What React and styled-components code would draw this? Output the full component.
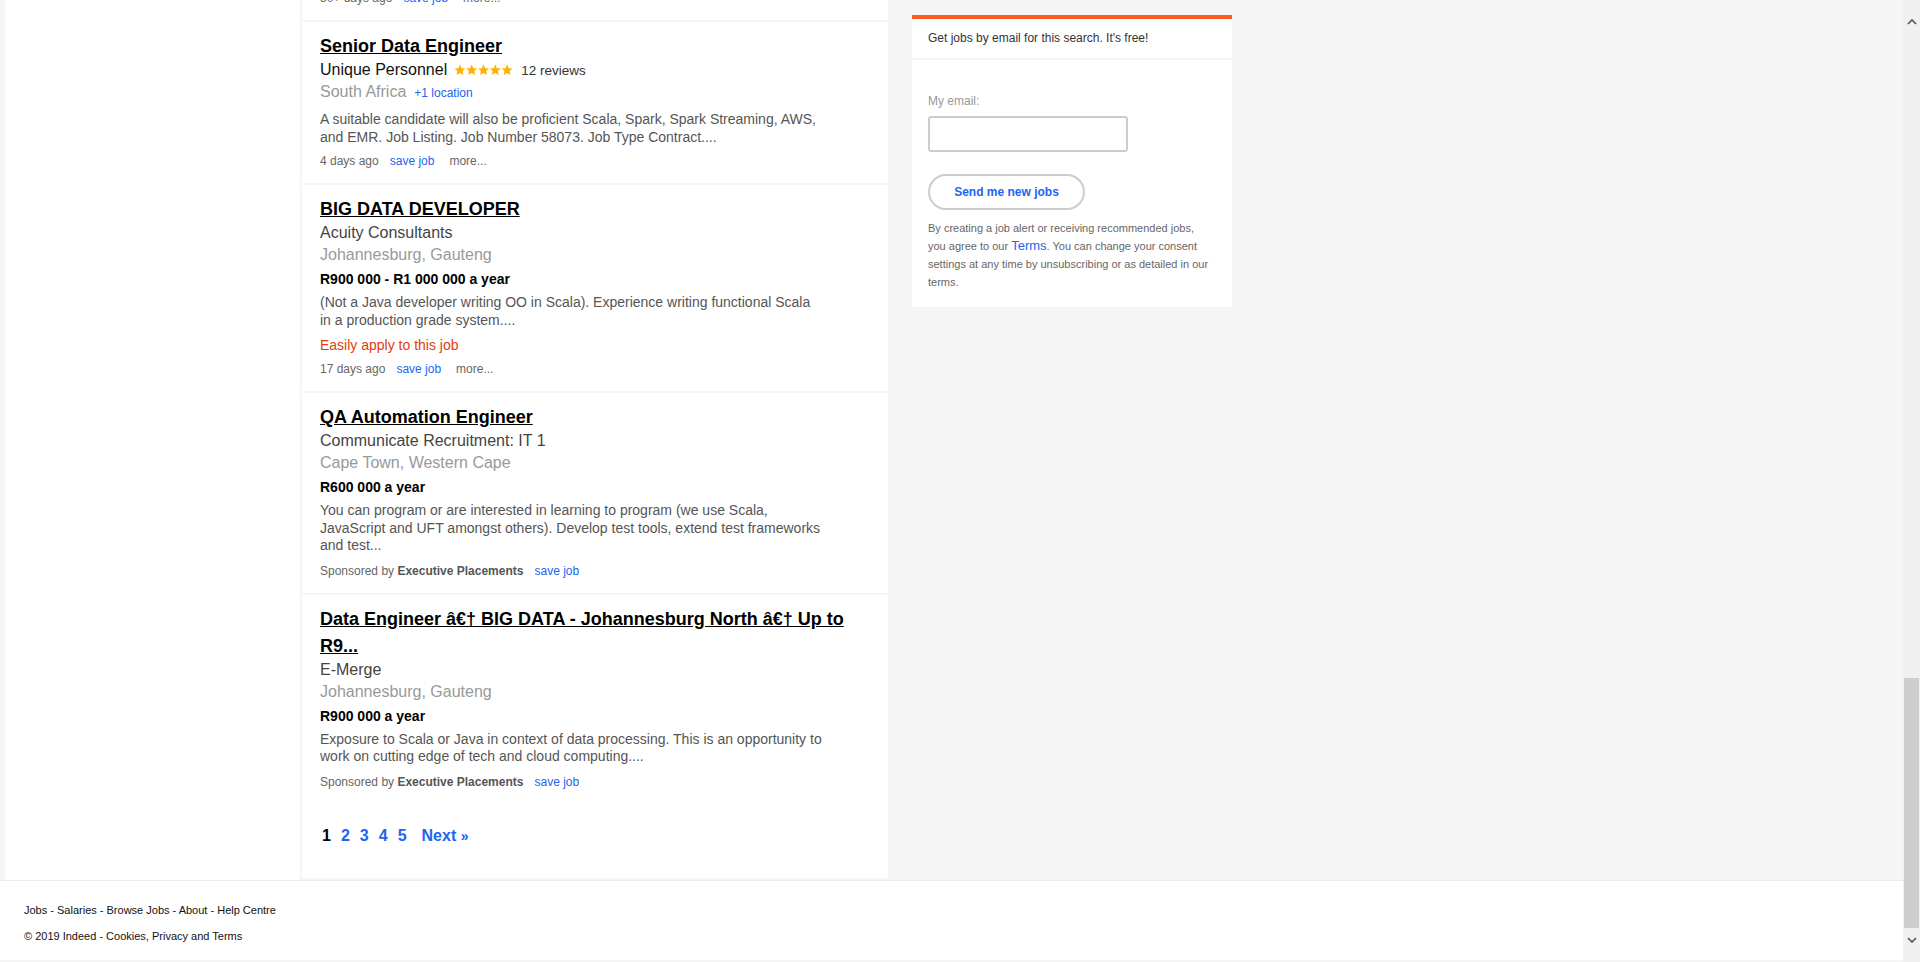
import React, { useLayoutEffect } from "react";
import styled, { createGlobalStyle } from "styled-components";

const GlobalStyle = createGlobalStyle`
  html, body {
    margin: 0;
    padding: 0;
  }
  body {
    background: #f5f5f5;
    font-family: "Liberation Sans", Arial, sans-serif;
    color: #333;
  }
  a {
    cursor: pointer;
  }
`;

const earlierJobs = [
  {
    title: "Scala Developer",
    company: "Network Recruitment",
    location: "Cape Town, Western Cape",
    salary: "R55 000 - R65 000 a month",
    snippet:
      "We are looking for a Scala developer to join a product team building distributed data platforms. Functional programming experience...",
    date: "2 days ago",
  },
  {
    title: "Senior Scala Engineer",
    company: "Parvana",
    location: "Cape Town, Western Cape",
    snippet:
      "Design and build services in Scala and Akka. Strong knowledge of JVM languages and event driven architecture....",
    easy: true,
    date: "5 days ago",
  },
  {
    title: "Big Data Engineer",
    company: "Datafin Recruitment",
    location: "Johannesburg, Gauteng",
    salary: "R700 000 - R850 000 a year",
    snippet:
      "Hadoop, Spark and Scala experience required. Work with large data sets in a cloud environment...",
    date: "6 days ago",
  },
  {
    title: "Software Developer (Scala / Java)",
    company: "Takealot.com",
    rating: "48 reviews",
    location: "Cape Town, Western Cape",
    snippet:
      "Experience in Java, Scala or a similar language. Comfortable working in an agile team with continuous delivery....",
    date: "8 days ago",
  },
  {
    title: "Data Platform Engineer",
    company: "Capitec Bank",
    rating: "212 reviews",
    location: "Stellenbosch, Western Cape",
    snippet:
      "Build streaming pipelines using Kafka, Spark and Scala. Experience with AWS or Azure data services is advantageous....",
    date: "10 days ago",
  },
  {
    title: "Functional Programmer",
    company: "Jumo",
    location: "Cape Town, Western Cape",
    snippet:
      "You enjoy writing Scala or Haskell and care about correctness, types and clean code. Remote friendly team....",
    easy: true,
    date: "12 days ago",
  },
  {
    title: "Backend Engineer - Scala",
    company: "Yoco",
    location: "Cape Town, Western Cape",
    salary: "R600 000 - R900 000 a year",
    snippet:
      "Our backend is built with Scala, Postgres and Kubernetes. You will own services end to end....",
    date: "14 days ago",
  },
  {
    title: "Spark Developer",
    company: "iOCO",
    location: "Johannesburg, Gauteng",
    snippet:
      "Develop batch and streaming jobs in Spark (Scala or Python). Experience with Hive and HDFS required....",
    date: "15 days ago",
  },
  {
    title: "Intermediate Scala Developer",
    company: "Glenrand MIB",
    location: "Sandton, Gauteng",
    salary: "R45 000 a month",
    snippet:
      "Intermediate developer with 3+ years Scala experience. Play Framework and Akka HTTP knowledge beneficial....",
    date: "20 days ago",
  },
  {
    title: "Data Engineer",
    company: "Standard Bank",
    rating: "1 536 reviews",
    location: "Johannesburg, Gauteng",
    snippet:
      "Build and maintain data pipelines on Hadoop and Spark. Scala, Java or Python programming skills required....",
    date: "22 days ago",
  },
  {
    title: "Machine Learning Engineer",
    company: "Discovery",
    rating: "671 reviews",
    location: "Sandton, Gauteng",
    snippet:
      "Deploy machine learning models to production. Experience with Spark, Scala and Python is essential....",
    date: "25 days ago",
  },
  {
    title: "Full Stack Developer",
    company: "Entelect",
    location: "Pretoria, Gauteng",
    snippet:
      "React on the front end and Scala on the back end. Collaborate with product owners to deliver features....",
    date: "30+ days ago",
  },
];

const visibleJobs = [
  {
    title: "Senior Data Engineer",
    company: "Unique Personnel",
    companyLink: true,
    rating: "12 reviews",
    location: "South Africa",
    extraLocation: "+1 location",
    snippet:
      "A suitable candidate will also be proficient Scala, Spark, Spark Streaming, AWS, and EMR. Job Listing. Job Number 58073. Job Type Contract....",
    date: "4 days ago",
  },
  {
    title: "BIG DATA DEVELOPER",
    company: "Acuity Consultants",
    location: "Johannesburg, Gauteng",
    salary: "R900 000 - R1 000 000 a year",
    snippet:
      "(Not a Java developer writing OO in Scala). Experience writing functional Scala in a production grade system....",
    easy: true,
    date: "17 days ago",
  },
  {
    title: "QA Automation Engineer",
    company: "Communicate Recruitment: IT 1",
    location: "Cape Town, Western Cape",
    salary: "R600 000 a year",
    snippet:
      "You can program or are interested in learning to program (we use Scala, JavaScript and UFT amongst others). Develop test tools, extend test frameworks and test...",
    sponsor: "Executive Placements",
  },
  {
    title: "Data Engineer â€† BIG DATA - Johannesburg North â€† Up to R9...",
    company: "E-Merge",
    location: "Johannesburg, Gauteng",
    salary: "R900 000 a year",
    snippet:
      "Exposure to Scala or Java in context of data processing. This is an opportunity to work on cutting edge of tech and cloud computing....",
    sponsor: "Executive Placements",
  },
];

const filters = [
  { name: "Salary Estimate", items: ["R300 000+ (54)", "R500 000+ (41)", "R700 000+ (22)", "R900 000+ (9)"] },
  { name: "Job Type", items: ["Permanent (48)", "Full-time (31)", "Contract (12)"] },
  { name: "Location", items: ["Cape Town, Western Cape (29)", "Johannesburg, Gauteng (18)", "Sandton, Gauteng (7)", "Pretoria, Gauteng (3)"] },
  { name: "Company", items: ["Executive Placements (6)", "E-Merge (5)", "Network Recruitment (4)", "Parvana (3)"] },
  { name: "Experience Level", items: ["Mid Level (25)", "Senior Level (19)", "Entry Level (4)"] },
];

function Stars() {
  return (
    <StarRow viewBox="0 0 60 12" width="59" height="12">
      {[0, 1, 2, 3, 4].map((i) => (
        <path
          key={i}
          transform={`translate(${i * 12} 0)`}
          d="M6 0.4l1.65 3.7 3.95.35-3 2.65.9 3.9L6 9 2.5 11l.9-3.9-3-2.65 3.95-.35z"
          fill="#ffb103"
        />
      ))}
    </StarRow>
  );
}

function Chevron({ down }) {
  return (
    <svg width="10" height="6" viewBox="0 0 10 6">
      <path
        d={down ? "M1 1l4 4 4-4" : "M1 5l4-4 4 4"}
        fill="none"
        stroke="#505050"
        strokeWidth="1.6"
      />
    </svg>
  );
}

function JobCard({ job }) {
  return (
    <Card>
      <Title href="#">{job.title}</Title>
      <CompanyLine>
        <Company $link={job.companyLink}>{job.company}</Company>
        {job.rating && (
          <>
            <Stars />
            <Reviews>{job.rating}</Reviews>
          </>
        )}
      </CompanyLine>
      <LocationLine>
        {job.location}
        {job.extraLocation && <MoreLocations href="#">{job.extraLocation}</MoreLocations>}
      </LocationLine>
      {job.salary && <Salary>{job.salary}</Salary>}
      <Snippet>{job.snippet}</Snippet>
      {job.easy && <EasyApply>Easily apply to this job</EasyApply>}
      {job.sponsor ? (
        <MetaRow $gap="8px">
          Sponsored by <SponsorName>{job.sponsor}</SponsorName>
          <SaveLink href="#">save job</SaveLink>
        </MetaRow>
      ) : (
        <MetaRow $gap="7px">
          {job.date}
          <SaveLink href="#">save job</SaveLink>
          <MoreLink href="#">more...</MoreLink>
        </MetaRow>
      )}
    </Card>
  );
}

export default function App() {
  useLayoutEffect(() => {
    const toBottom = () =>
      window.scrollTo(0, document.documentElement.scrollHeight);
    toBottom();
    const t = setTimeout(toBottom, 30);
    return () => clearTimeout(t);
  }, []);

  return (
    <>
      <GlobalStyle />
      <Frame>
        <Page>
          <Header>
            <Logo>indeed</Logo>
            <Nav>
              <NavLink href="#">Find Jobs</NavLink>
              <NavLink href="#">Company Reviews</NavLink>
              <NavLink href="#">Find Salaries</NavLink>
            </Nav>
          </Header>
          <SearchBar>
            <Field>
              <FieldLabel>What</FieldLabel>
              <SearchInput defaultValue="scala" />
            </Field>
            <Field>
              <FieldLabel>Where</FieldLabel>
              <SearchInput defaultValue="South Africa" />
            </Field>
            <FindButton>Find Jobs</FindButton>
          </SearchBar>
          <Main>
            <LeftColumn>
              {filters.map((f) => (
                <FilterGroup key={f.name}>
                  <FilterTitle>{f.name}</FilterTitle>
                  {f.items.map((it) => (
                    <FilterItem key={it} href="#">
                      {it}
                    </FilterItem>
                  ))}
                </FilterGroup>
              ))}
            </LeftColumn>
            <Results>
              <ResultsHead>
                <ResultsTitle>scala jobs in South Africa</ResultsTitle>
                <ResultsCount>Page 1 of 63 jobs</ResultsCount>
              </ResultsHead>
              {earlierJobs.map((job, i) => (
                <JobCard job={job} key={"e" + i} />
              ))}
              {visibleJobs.map((job, i) => (
                <JobCard job={job} key={"v" + i} />
              ))}
              <Pagination>
                <PageCurrent>1</PageCurrent>
                {[2, 3, 4, 5].map((n) => (
                  <PageLink href="#" key={n}>
                    {n}
                  </PageLink>
                ))}
                <NextLink href="#">
                  Next <Raquo>»</Raquo>
                </NextLink>
              </Pagination>
            </Results>
            <Side>
              <AlertBox>
                <AlertHead>Get jobs by email for this search. It's free!</AlertHead>
                <AlertBody>
                  <EmailLabel>My email:</EmailLabel>
                  <EmailInput type="email" />
                  <SendButton>Send me new jobs</SendButton>
                  <Consent>
                    By creating a job alert or receiving recommended jobs, you
                    agree to our <TermsLink href="#">Terms</TermsLink>. You can
                    change your consent settings at any time by unsubscribing or
                    as detailed in our terms.
                  </Consent>
                </AlertBody>
              </AlertBox>
            </Side>
          </Main>
          <Footer>
            <FooterLinks>
              Jobs - Salaries - Browse Jobs - About - Help Centre
            </FooterLinks>
            <FooterLinks>© 2019 Indeed - Cookies, Privacy and Terms</FooterLinks>
          </Footer>
        </Page>
        <ScrollRail>
          <ScrollWindow>
            <ScrollButton $pad="19px 0 0">
              <Chevron />
            </ScrollButton>
            <ScrollTrack>
              <ScrollThumb />
            </ScrollTrack>
            <ScrollButton $pad="9px 0 0">
              <Chevron down />
            </ScrollButton>
          </ScrollWindow>
        </ScrollRail>
      </Frame>
    </>
  );
}

const Frame = styled.div`
  display: flex;
  align-items: stretch;
`;

const Page = styled.div`
  flex: 1;
  min-width: 0;
`;

const ScrollRail = styled.div`
  width: 17px;
  flex-shrink: 0;
  background: #f0f0f0;
  display: flex;
  flex-direction: column;
  justify-content: flex-end;
`;

const ScrollWindow = styled.div`
  height: 962px;
  display: flex;
  flex-direction: column;
`;

const ScrollButton = styled.div`
  height: 34px;
  box-sizing: border-box;
  padding: ${(p) => p.$pad};
  display: flex;
  justify-content: center;
  align-items: flex-start;
`;

const ScrollTrack = styled.div`
  flex: 1;
  display: flex;
  flex-direction: column;
  justify-content: flex-end;
  padding: 0 1px;
`;

const ScrollThumb = styled.div`
  height: 250px;
  background: #cdcdcd;
`;

const Header = styled.header`
  display: flex;
  align-items: center;
  gap: 40px;
  height: 60px;
  padding: 0 24px;
  background: #fff;
  border-bottom: 1px solid #e4e4e4;
`;

const Logo = styled.div`
  font-size: 30px;
  font-weight: bold;
  color: #2164f3;
  letter-spacing: -1px;
`;

const Nav = styled.nav`
  display: flex;
  gap: 28px;
`;

const NavLink = styled.a`
  font-size: 14px;
  font-weight: bold;
  color: #333;
  text-decoration: none;
`;

const SearchBar = styled.div`
  display: flex;
  align-items: flex-end;
  gap: 16px;
  padding: 24px 24px 28px 320px;
  background: #fff;
  border-bottom: 1px solid #e4e4e4;
`;

const Field = styled.label`
  display: flex;
  flex-direction: column;
  gap: 6px;
`;

const FieldLabel = styled.span`
  font-size: 15px;
  font-weight: bold;
  color: #000;
`;

const SearchInput = styled.input`
  width: 260px;
  height: 34px;
  padding: 0 10px;
  border: 2px solid #ccc;
  border-radius: 4px;
  font: 16px "Liberation Sans", Arial, sans-serif;
`;

const FindButton = styled.button`
  height: 40px;
  padding: 0 24px;
  border: 0;
  border-radius: 4px;
  background: #2164f3;
  color: #fff;
  font: bold 15px "Liberation Sans", Arial, sans-serif;
`;

const Main = styled.main`
  display: flex;
  align-items: stretch;
  padding-left: 5px;
  margin-top: 16px;
`;

const LeftColumn = styled.aside`
  width: 295px;
  flex-shrink: 0;
  background: #fff;
  padding: 20px 18px;
  box-sizing: border-box;
`;

const FilterGroup = styled.div`
  margin-bottom: 22px;
`;

const FilterTitle = styled.div`
  font-size: 14px;
  font-weight: bold;
  color: #000;
  margin-bottom: 8px;
`;

const FilterItem = styled.a`
  display: block;
  font-size: 13px;
  line-height: 20px;
  color: #2164f3;
  text-decoration: none;
`;

const Results = styled.section`
  width: 586px;
  flex-shrink: 0;
  margin-left: 2px;
  padding-bottom: 2px;
  display: flex;
  flex-direction: column;
  gap: 2px;
`;

const ResultsHead = styled.div`
  background: #fff;
  padding: 18px 18px 14px;
`;

const ResultsTitle = styled.h1`
  margin: 0 0 6px;
  font-size: 20px;
  color: #000;
`;

const ResultsCount = styled.div`
  font-size: 13px;
  color: #666;
`;

const Card = styled.div`
  background: #fff;
  padding: 11px 18px 14px;
`;

const Title = styled.a`
  display: block;
  max-width: 540px;
  font-size: 18px;
  font-weight: bold;
  line-height: 27px;
  color: #000;
  text-decoration: underline;
`;

const CompanyLine = styled.div`
  display: flex;
  align-items: center;
  height: 20px;
`;

const Company = styled.span`
  font-size: 16px;
  line-height: 20px;
  color: ${(p) => (p.$link ? "#111" : "#444")};
`;

const StarRow = styled.svg`
  margin-left: 7px;
  display: block;
`;

const Reviews = styled.span`
  margin-left: 8px;
  font-size: 13.5px;
  color: #333;
`;

const LocationLine = styled.div`
  font-size: 16px;
  line-height: 24px;
  color: #999;
`;

const MoreLocations = styled.a`
  margin-left: 8px;
  font-size: 12px;
  color: #2164f3;
  text-decoration: none;
`;

const Salary = styled.div`
  margin-top: 4px;
  font-size: 14px;
  font-weight: bold;
  line-height: 17px;
  color: #000;
`;

const Snippet = styled.div`
  margin-top: 6px;
  max-width: 502px;
  font-size: 14px;
  line-height: 17.5px;
  color: #555;
`;

const EasyApply = styled.div`
  margin-top: 8px;
  font-size: 14px;
  line-height: 17px;
  color: #e0400b;
`;

const MetaRow = styled.div`
  margin-top: ${(p) => p.$gap};
  font-size: 12px;
  line-height: 16px;
  color: #666;
`;

const SponsorName = styled.b`
  color: #555;
`;

const SaveLink = styled.a`
  margin-left: 11px;
  color: #2164f3;
  text-decoration: none;
`;

const MoreLink = styled.a`
  margin-left: 15px;
  color: #666;
  text-decoration: none;
`;

const Pagination = styled.div`
  display: flex;
  align-items: baseline;
  gap: 10px;
  background: #fff;
  margin-top: -2px;
  padding: 21px 20px 31px;
  font-size: 16px;
  font-weight: bold;
  line-height: 22px;
`;

const PageCurrent = styled.span`
  color: #000;
`;

const PageLink = styled.a`
  color: #2164f3;
  text-decoration: none;
`;

const NextLink = styled(PageLink)`
  margin-left: 5px;
`;

const Raquo = styled.span`
  font-size: 14px;
`;

const Side = styled.aside`
  width: 320px;
  flex-shrink: 0;
  margin-left: 24px;
  display: flex;
  flex-direction: column;
  justify-content: flex-end;
  padding-bottom: 573px;
`;

const AlertBox = styled.div`
  background: #fff;
  border-top: 4px solid #fd5b1f;
`;

const AlertHead = styled.div`
  padding: 12px 16px 13px;
  font-size: 12px;
  line-height: 14px;
  color: #333;
  border-bottom: 2px solid #f5f5f5;
`;

const AlertBody = styled.div`
  padding: 34px 16px 16px;
  display: flex;
  flex-direction: column;
  align-items: flex-start;
`;

const EmailLabel = styled.label`
  font-size: 12px;
  line-height: 14px;
  color: #999;
`;

const EmailInput = styled.input`
  box-sizing: border-box;
  width: 200px;
  height: 36px;
  margin-top: 8px;
  border: 2px solid #ccc;
  border-radius: 3px;
`;

const SendButton = styled.button`
  box-sizing: border-box;
  width: 157px;
  height: 36px;
  margin-top: 22px;
  background: #fff;
  border: 2px solid #ccc;
  border-radius: 18px;
  color: #2164f3;
  font: bold 12px "Liberation Sans", Arial, sans-serif;
`;

const Consent = styled.p`
  margin: 9px 0 0;
  max-width: 282px;
  font-size: 11px;
  line-height: 18px;
  color: #666;
`;

const TermsLink = styled.a`
  font-size: 13px;
  color: #2164f3;
  text-decoration: none;
`;

const Footer = styled.footer`
  margin-bottom: 2px;
  padding: 21px 24px 16px;
  background: #fff;
  border-top: 1px solid #ececec;
  display: flex;
  flex-direction: column;
  gap: 10px;
`;

const FooterLinks = styled.div`
  font-size: 11px;
  line-height: 16px;
  color: #111;
`;
